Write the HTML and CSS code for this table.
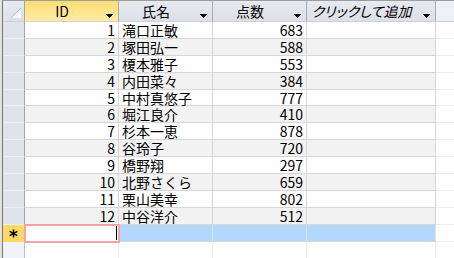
FILE: index.html
```html
<!DOCTYPE html>
<html lang="ja">
<head>
<meta charset="utf-8">
<title>テーブル</title>
<link rel="stylesheet" href="styles.css">
</head>
<body>
<div class="sheet">
  <div class="grid">
    <div class="hd corner"><svg class="tri" width="21" height="19" viewBox="0 0 21 19"><defs><linearGradient id="g" x1="0" y1="0" x2="1" y2="1"><stop offset="0" stop-color="#e9edf3"/><stop offset="1" stop-color="#fafbfd"/></linearGradient></defs><polygon points="8,17 18,7 18,17" fill="url(#g)"/><line x1="8" y1="17" x2="18" y2="7" stroke="#b7c2d2" stroke-width="1"/></svg></div>
    <div class="hd on"><span class="ht">ID</span><svg class="arr" width="7" height="4" viewBox="0 0 7 4"><path d="M0 0h7v1H0zM1 1h5v1H1zM2 2h3v1H2zM3 3h1v1H3z"/></svg></div>
    <div class="hd"><span class="ht">氏名</span><svg class="arr" width="7" height="4" viewBox="0 0 7 4"><path d="M0 0h7v1H0zM1 1h5v1H1zM2 2h3v1H2zM3 3h1v1H3z"/></svg></div>
    <div class="hd"><span class="ht">点数</span><svg class="arr" width="7" height="4" viewBox="0 0 7 4"><path d="M0 0h7v1H0zM1 1h5v1H1zM2 2h3v1H2zM3 3h1v1H3z"/></svg></div>
    <div class="hd"><span class="ht add">クリックして追加</span><svg class="arr" width="7" height="4" viewBox="0 0 7 4"><path d="M0 0h7v1H0zM1 1h5v1H1zM2 2h3v1H2zM3 3h1v1H3z"/></svg></div>
    <div class="hd hf"></div>

    <div class="row"><div class="rs"></div><div class="c num">1</div><div class="c">滝口正敏</div><div class="c num">683</div><div class="c"></div><div class="f"></div></div>
    <div class="row alt"><div class="rs"></div><div class="c num">2</div><div class="c">塚田弘一</div><div class="c num">588</div><div class="c"></div><div class="f"></div></div>
    <div class="row"><div class="rs"></div><div class="c num">3</div><div class="c">榎本雅子</div><div class="c num">553</div><div class="c"></div><div class="f"></div></div>
    <div class="row alt"><div class="rs"></div><div class="c num">4</div><div class="c">内田菜々</div><div class="c num">384</div><div class="c"></div><div class="f"></div></div>
    <div class="row"><div class="rs"></div><div class="c num">5</div><div class="c">中村真悠子</div><div class="c num">777</div><div class="c"></div><div class="f"></div></div>
    <div class="row alt"><div class="rs"></div><div class="c num">6</div><div class="c">堀江良介</div><div class="c num">410</div><div class="c"></div><div class="f"></div></div>
    <div class="row"><div class="rs"></div><div class="c num">7</div><div class="c">杉本一恵</div><div class="c num">878</div><div class="c"></div><div class="f"></div></div>
    <div class="row alt"><div class="rs"></div><div class="c num">8</div><div class="c">谷玲子</div><div class="c num">720</div><div class="c"></div><div class="f"></div></div>
    <div class="row"><div class="rs"></div><div class="c num">9</div><div class="c">橋野翔</div><div class="c num">297</div><div class="c"></div><div class="f"></div></div>
    <div class="row alt"><div class="rs"></div><div class="c num">10</div><div class="c">北野さくら</div><div class="c num">659</div><div class="c"></div><div class="f"></div></div>
    <div class="row"><div class="rs"></div><div class="c num">11</div><div class="c">栗山美幸</div><div class="c num">802</div><div class="c"></div><div class="f"></div></div>
    <div class="row alt"><div class="rs"></div><div class="c num">12</div><div class="c">中谷洋介</div><div class="c num">512</div><div class="c"></div><div class="f"></div></div>

    <div class="row"><div class="ns"><svg width="9" height="9" viewBox="0 0 9 9"><path d="M4.5 0.5v8M0.7 2.3l7.6 4.4M0.7 6.7l7.6-4.4" stroke="#000" stroke-width="1.5" fill="none"/></svg></div><div class="c nid"><span class="caret"></span></div><div class="c nb"></div><div class="c nb"></div><div class="c nb"></div><div class="f"></div></div>

    <div class="row"><div class="es"></div><div class="e"></div><div class="e"></div><div class="e"></div><div class="e"></div><div class="ef"></div></div>
  </div>
</div>
</body>
</html>
```

FILE: styles.css
```css
html, body {
  margin: 0;
  height: 100%;
}
body {
  background: #e2e2e2;
  font-family: "Noto Sans CJK JP", "Noto Sans", sans-serif;
  font-size: 14px;
  color: #000;
  overflow: hidden;
}
.sheet {
  margin-left: 2px;
  border-left: 1px solid #777;
  border-top: 1px solid #9d9d9d;
  height: 257px;
  background: #fff;
}
.grid {
  display: grid;
  grid-template-columns: 22px 94px 94px 94px 129px 1fr;
  grid-template-rows: 21px repeat(13, 16.9px) 1fr;
  height: 100%;
}
.grid > div, .row > div {
  box-sizing: border-box;
  min-width: 0;
}
.row {
  display: contents;
}
.hd {
  display: flex;
  align-items: flex-start;
  background: linear-gradient(#e7eaf0, #dbdfe6);
  border-right: 1px solid #a7abb2;
  border-bottom: 1px solid #cdd1d7;
}
.hd.on {
  background: linear-gradient(#ffde72, #ffeba4);
}
.hd.corner {
  border-right-color: #a0a3a9;
}
.tri {
  display: block;
}
.hd.hf {
  background: #eef0f8;
  border-right: none;
}
.ht {
  flex: 1;
  text-align: center;
  line-height: 16px;
  padding-top: 2px;
  white-space: nowrap;
}
.ht.add {
  font-style: italic;
  font-feature-settings: "palt";
}
.arr {
  flex: none;
  margin: 13px 5px 0 7px;
}
.c {
  border-right: 1px solid #d6d6d6;
  border-bottom: 1px solid #d6d6d6;
  line-height: 16px;
  padding: 0 3px;
  white-space: nowrap;
}
.num {
  text-align: right;
}
.alt .c {
  background: #f2f2f2;
}
.rs {
  background: #e0e3e9;
  border-right: 1px solid #a3a7ad;
  border-bottom: 1px solid #eceef2;
}
.f {
  border-bottom: 1px solid #ececec;
}
.ns {
  background: #ffd966;
  border-right: 1px solid #a3a7ad;
  display: flex;
  align-items: center;
  justify-content: center;
}
.ns svg {
  display: block;
}
.c.nid {
  background: #fff;
  outline: 2px solid #f3a3a9;
  outline-offset: -1px;
  position: relative;
  z-index: 1;
  display: flex;
  justify-content: flex-end;
  align-items: center;
  padding: 0 1px;
}
.caret {
  width: 1px;
  height: 15px;
  background: #000;
}
.c.nb {
  background: #b4d7fd;
  border-right-color: #d6e6f8;
}
.es {
  background: #f2f3f8;
  border-right: 1px solid #c3c6cc;
}
.e {
  border-right: 1px solid #efefef;
}
```
